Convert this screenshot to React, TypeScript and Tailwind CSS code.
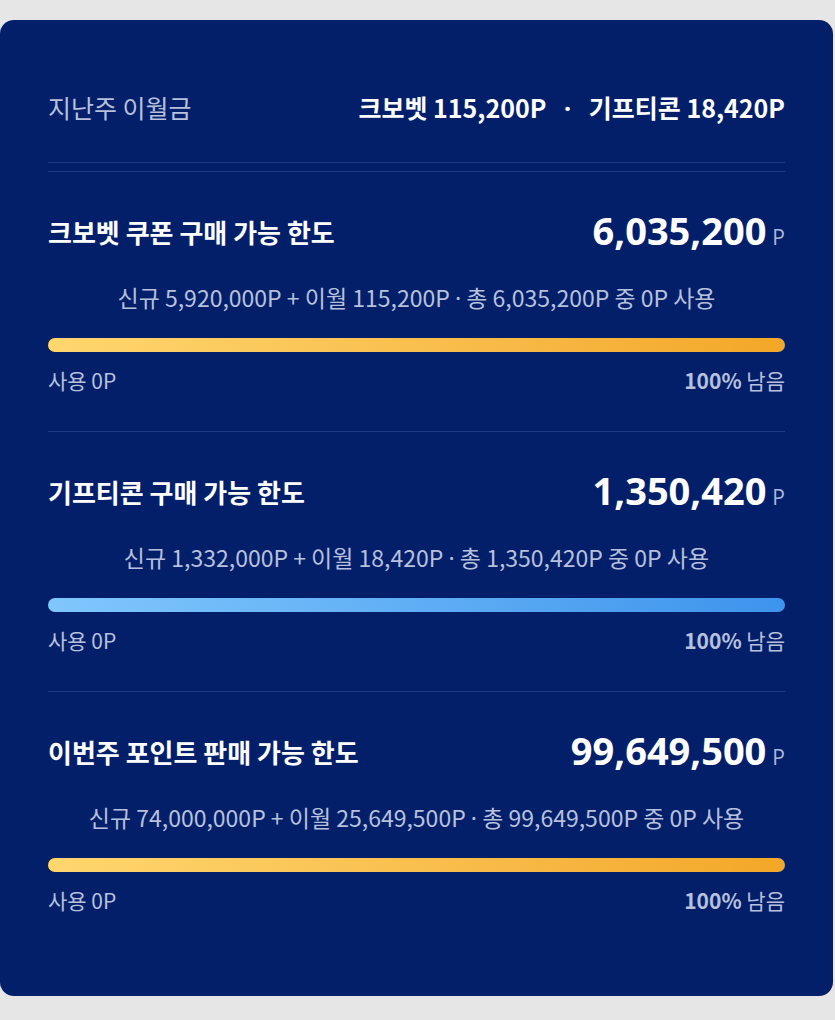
import React from "react";

type Limit = {
  title: string;
  amount: string;
  fresh: string;
  carry: string;
  bar: string;
};

const limits: Limit[] = [
  {
    title: "크보벳 쿠폰 구매 가능 한도",
    amount: "6,035,200",
    fresh: "5,920,000P",
    carry: "115,200P",
    bar: "bg-gradient-to-r from-[#fed76e] to-[#f3a726]",
  },
  {
    title: "기프티콘 구매 가능 한도",
    amount: "1,350,420",
    fresh: "1,332,000P",
    carry: "18,420P",
    bar: "bg-gradient-to-r from-[#80c7fc] to-[#3d94ec]",
  },
  {
    title: "이번주 포인트 판매 가능 한도",
    amount: "99,649,500",
    fresh: "74,000,000P",
    carry: "25,649,500P",
    bar: "bg-gradient-to-r from-[#fed76e] to-[#f3a726]",
  },
];

const kr = "font-['Noto_Sans_CJK_KR',sans-serif]";
const dot = "font-['Noto_Sans',sans-serif]";

function LimitBlock({ item, last }: { item: Limit; last: boolean }) {
  return (
    <div className={`pt-[40px] ${last ? "" : "border-b border-[#1f3a82] pb-[37px]"}`}>
      <div className="flex h-[40px] items-center justify-between">
        <p className="text-[26px] font-bold leading-[40px] text-white">{item.title}</p>
        <p className="flex items-baseline gap-[6px]">
          <span className="font-['Open_Sans',sans-serif] text-[38px] font-bold leading-[40px] text-white">
            {item.amount}
          </span>
          <span className="font-['Open_Sans',sans-serif] text-[21px] text-[#a9b7db]">P</span>
        </p>
      </div>
      <p className="mt-[30px] text-center text-[23px] leading-[30px] text-[#b7c1de]">
        신규 {item.fresh} + 이월 {item.carry} <span className={dot}>·</span> 총 {item.amount}P 중 0P 사용
      </p>
      <div className={`mt-[25px] h-[14px] rounded-full ${item.bar}`} />
      <div className="mt-[14px] flex h-[28px] items-center justify-between text-[21px] leading-[28px] text-[#b7c1de]">
        <span>사용 0P</span>
        <span>
          <b className="font-bold">100%</b> 남음
        </span>
      </div>
    </div>
  );
}

export default function App() {
  return (
    <div className={`min-h-[1020px] bg-[#e6e6e6] pt-[20px] ${kr}`}>
      <div className="h-[976px] w-[833px] rounded-[14px] bg-[#031f6a] px-[48px]">
        <div className="flex h-[142px] items-start justify-between pt-[72px]">
          <span className="text-[25px] leading-[30px] text-[#b7c1de]">지난주 이월금</span>
          <span className="text-[25px] font-bold leading-[30px] text-white">
            크보벳 115,200P <span className={`${dot} mx-[12px]`}>·</span> 기프티콘 18,420P
          </span>
        </div>
        <div className="border-t border-[#1f3a82]" />
        <div className="mt-[8px] border-t border-[#1f3a82]" />
        {limits.map((l, i) => (
          <LimitBlock key={l.title} item={l} last={i === limits.length - 1} />
        ))}
      </div>
    </div>
  );
}
